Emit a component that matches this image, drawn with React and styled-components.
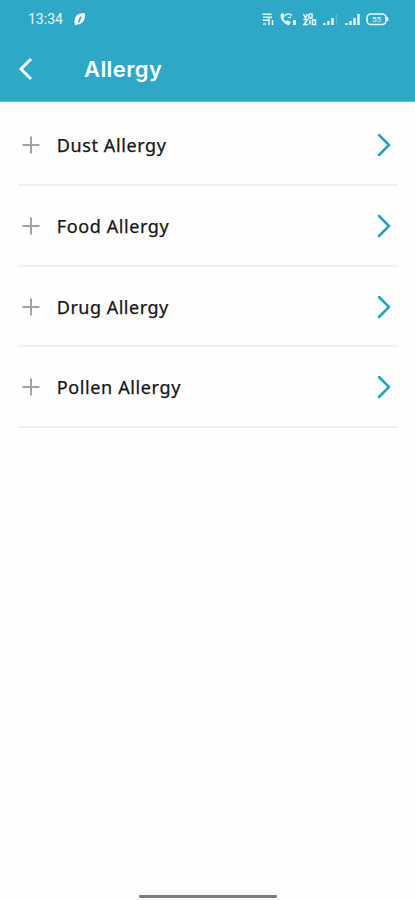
import React from 'react';
import styled, { createGlobalStyle } from 'styled-components';

const allergies = [
  { name: 'Dust Allergy', spacing: '0.6px' },
  { name: 'Food Allergy', spacing: '0.6px' },
  { name: 'Drug Allergy', spacing: '0.5px' },
  { name: 'Pollen Allergy', spacing: '0.62px' },
];

function LeafIcon() {
  return (
    <svg width="14" height="16" viewBox="0 0 14 16">
      <path
        d="M2 14C.5 9 2.500 3 7.500 2.500c2-.5 4-1 4.500.5.500 4-1 8-5 10-1.500.5-3 .5-5 1Z"
        fill="#fff"
      />
      <path d="M5.500 11.500 8 5.500" stroke="#2fa8c7" strokeWidth="1.600" fill="none" />
    </svg>
  );
}

function StatusIcons() {
  return (
    <svg width="130" height="18" viewBox="0 0 130 18" fill="none" stroke="#e8f7fb">
      <path d="M2.500 4.200h9M3 7.200h9M2.500 10.200h6M3 14h3M9 8v7M12.500 10v5" strokeWidth="1.500" />
      <path
        d="M21 4c-1 5 3 10 8 11l1.500-3-3-1.500-1.500 1c-2-1-2.500-2.500-3-4l1.500-1-1-3Z"
        fill="#e8f7fb"
        strokeWidth="0.500"
      />
      <path d="M25 5.500c2-2 5-2 7 0M28 8c1-1 2-1 3 0" strokeWidth="1.400" />
      <path d="M34.500 10v5" strokeWidth="3" />
      <path
        d="m43.500 4 2 4 2-4M49 4v4h3V4h-3M43.500 9.500h4l-3.500 5h4M50 10v4.500"
        strokeWidth="1.500"
      />
      <rect x="52.500" y="10" width="3" height="4.500" strokeWidth="1.500" />
      <path d="M64.500 13v2M68.500 11v4M72.500 8v7" strokeWidth="2.400" />
      <path d="M76.500 4v11" strokeWidth="1.500" opacity="0.2" />
      <path d="M86.500 13v2M90.500 11v4M94.500 8v7M98.500 4v11" strokeWidth="2.400" />
      <rect x="107" y="4" width="19" height="10.500" rx="4" strokeWidth="1.600" />
      <path d="M127.500 7v4" strokeWidth="1.800" />
      <text
        x="116.500"
        y="12.300"
        textAnchor="middle"
        fill="#e8f7fb"
        stroke="none"
        fontFamily="Roboto, sans-serif"
        fontSize="8"
      >
        55
      </text>
    </svg>
  );
}

export default function App() {
  return (
    <Screen>
      <GlobalStyle />
      <Header>
        <StatusBar>
          <Time>13:34</Time>
          <LeafIcon />
          <StatusRight>
            <StatusIcons />
          </StatusRight>
        </StatusBar>
        <TitleBar>
          <BackButton aria-label="Back">
            <svg width="16" height="24" viewBox="0 0 16 24">
              <path d="M13 2 3 12l10 10" fill="none" stroke="#fff" strokeWidth="2.900" />
            </svg>
          </BackButton>
          <Title>Allergy</Title>
        </TitleBar>
      </Header>
      <List>
        {allergies.map((allergy) => (
          <Row key={allergy.name}>
            <svg width="18" height="18" viewBox="0 0 18 18">
              <path d="M9 .5v17M.5 9h17" stroke="#a3a3a3" strokeWidth="2" />
            </svg>
            <Label $spacing={allergy.spacing}>{allergy.name}</Label>
            <svg width="16" height="24" viewBox="0 0 16 24">
              <path
                d="m3 2 10 10L3 22"
                fill="none"
                stroke="#269fbd"
                strokeWidth="2.500"
                strokeLinecap="round"
              />
            </svg>
          </Row>
        ))}
      </List>
      <HomeIndicator />
    </Screen>
  );
}

const GlobalStyle = createGlobalStyle`
  * {
    box-sizing: border-box;
  }

  body {
    margin: 0;
    background: #fff;
  }
`;

const Screen = styled.div`
  display: flex;
  flex-direction: column;
  height: 900px;
  background: #fefefe;
`;

const Header = styled.header`
  height: 102px;
  flex-shrink: 0;
  background: #2fa8c7;
  border-bottom: 1px solid #58b8d0;
  color: #fff;
`;

const StatusBar = styled.div`
  display: flex;
  align-items: center;
  height: 38px;
  padding-left: 28px;
`;

const Time = styled.span`
  width: 45px;
  font-family: Roboto, sans-serif;
  font-size: 14px;
  line-height: 16px;
  color: #e8f7fb;
`;

const StatusRight = styled.div`
  display: flex;
  margin-left: auto;
  padding-right: 25px;
`;

const TitleBar = styled.div`
  display: flex;
  align-items: center;
  height: 62px;
  padding-left: 18px;
`;

const BackButton = styled.button`
  display: flex;
  width: 66px;
  padding: 0;
  border: none;
  background: none;
  cursor: pointer;
`;

const Title = styled.h1`
  margin: 0;
  font-family: Inter, sans-serif;
  font-size: 22px;
  font-weight: 600;
  line-height: 28px;
  letter-spacing: 0.4px;
`;

const List = styled.main`
  flex: 1;
  padding: 3px 17px 0 18px;
`;

const Row = styled.div`
  display: flex;
  align-items: center;
  height: 80.8px;
  padding: 1.2px 6px 0 4.4px;
  border-bottom: 2px solid #f0f0f0;
`;

const Label = styled.span`
  flex: 1;
  margin-left: 16.4px;
  font-family: 'Noto Sans', sans-serif;
  font-size: 18px;
  font-weight: 400;
  -webkit-text-stroke: 0.25px #151515;
  letter-spacing: ${(props) => props.$spacing};
  color: #151515;
`;

const HomeIndicator = styled.div`
  width: 138px;
  height: 3px;
  margin: 0 auto 2px;
  border-radius: 1px;
  background: #7b7b7b;
`;
